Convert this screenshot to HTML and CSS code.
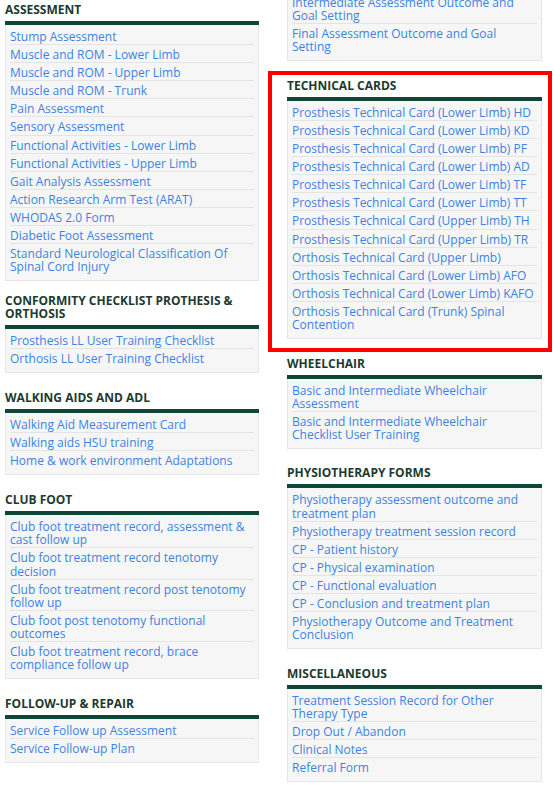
FILE: index.html
```html
<!DOCTYPE html>
<html lang="en">
<head>
<meta charset="utf-8">
<title>Forms</title>
<link rel="stylesheet" href="styles.css">
</head>
<body>
<div class="page">
  <div class="col col-left">
    <section class="sec sec-tight">
      <h2 class="sec-title">Assessment</h2>
      <ul class="box">
        <li><a href="#">Stump Assessment</a></li>
        <li><a href="#">Muscle and ROM - Lower Limb</a></li>
        <li><a href="#">Muscle and ROM - Upper Limb</a></li>
        <li><a href="#">Muscle and ROM - Trunk</a></li>
        <li><a href="#">Pain Assessment</a></li>
        <li><a href="#">Sensory Assessment</a></li>
        <li><a href="#">Functional Activities - Lower Limb</a></li>
        <li><a href="#">Functional Activities - Upper Limb</a></li>
        <li><a href="#">Gait Analysis Assessment</a></li>
        <li><a href="#">Action Research Arm Test (ARAT)</a></li>
        <li><a href="#">WHODAS 2.0 Form</a></li>
        <li><a href="#">Diabetic Foot Assessment</a></li>
        <li><a href="#">Standard Neurological Classification Of Spinal Cord Injury</a></li>
      </ul>
    </section>
    <section class="sec">
      <h2 class="sec-title">Conformity Checklist Prothesis &amp; Orthosis</h2>
      <ul class="box">
        <li><a href="#">Prosthesis LL User Training Checklist</a></li>
        <li><a href="#">Orthosis LL User Training Checklist</a></li>
      </ul>
    </section>
    <section class="sec">
      <h2 class="sec-title">Walking Aids and ADL</h2>
      <ul class="box">
        <li><a href="#">Walking Aid Measurement Card</a></li>
        <li><a href="#">Walking aids HSU training</a></li>
        <li><a href="#">Home &amp; work environment Adaptations</a></li>
      </ul>
    </section>
    <section class="sec">
      <h2 class="sec-title">Club Foot</h2>
      <ul class="box">
        <li><a href="#">Club foot treatment record, assessment &amp; cast follow up</a></li>
        <li><a href="#">Club foot treatment record tenotomy decision</a></li>
        <li><a href="#">Club foot treatment record post tenotomy follow up</a></li>
        <li><a href="#">Club foot post tenotomy functional outcomes</a></li>
        <li><a href="#">Club foot treatment record, brace compliance follow up</a></li>
      </ul>
    </section>
    <section class="sec">
      <h2 class="sec-title">Follow-up &amp; Repair</h2>
      <ul class="box">
        <li><a href="#">Service Follow up Assessment</a></li>
        <li><a href="#">Service Follow-up Plan</a></li>
      </ul>
    </section>
  </div>

  <div class="col col-right">
    <section class="sec">
      <ul class="box box-cont">
        <li><a href="#">Intermediate Assessment Outcome and Goal Setting</a></li>
        <li><a href="#">Final Assessment Outcome and Goal Setting</a></li>
      </ul>
    </section>
    <section class="sec">
      <h2 class="sec-title">Technical Cards</h2>
      <ul class="box">
        <li><a href="#">Prosthesis Technical Card (Lower Limb) HD</a></li>
        <li><a href="#">Prosthesis Technical Card (Lower Limb) KD</a></li>
        <li><a href="#">Prosthesis Technical Card (Lower Limb) PF</a></li>
        <li><a href="#">Prosthesis Technical Card (Lower Limb) AD</a></li>
        <li><a href="#">Prosthesis Technical Card (Lower Limb) TF</a></li>
        <li><a href="#">Prosthesis Technical Card (Lower Limb) TT</a></li>
        <li><a href="#">Prosthesis Technical Card (Upper Limb) TH</a></li>
        <li><a href="#">Prosthesis Technical Card (Upper Limb) TR</a></li>
        <li><a href="#">Orthosis Technical Card (Upper Limb)</a></li>
        <li><a href="#">Orthosis Technical Card (Lower Limb) AFO</a></li>
        <li><a href="#">Orthosis Technical Card (Lower Limb) KAFO</a></li>
        <li><a href="#">Orthosis Technical Card (Trunk) Spinal Contention</a></li>
      </ul>
    </section>
    <section class="sec">
      <h2 class="sec-title">Wheelchair</h2>
      <ul class="box">
        <li><a href="#">Basic and Intermediate Wheelchair Assessment</a></li>
        <li><a href="#">Basic and Intermediate Wheelchair Checklist User Training</a></li>
      </ul>
    </section>
    <section class="sec">
      <h2 class="sec-title">Physiotherapy Forms</h2>
      <ul class="box">
        <li><a href="#">Physiotherapy assessment outcome and treatment plan</a></li>
        <li><a href="#">Physiotherapy treatment session record</a></li>
        <li><a href="#">CP - Patient history</a></li>
        <li><a href="#">CP - Physical examination</a></li>
        <li><a href="#">CP - Functional evaluation</a></li>
        <li><a href="#">CP - Conclusion and treatment plan</a></li>
        <li><a href="#">Physiotherapy Outcome and Treatment Conclusion</a></li>
      </ul>
    </section>
    <section class="sec">
      <h2 class="sec-title">Miscellaneous</h2>
      <ul class="box">
        <li><a href="#">Treatment Session Record for Other Therapy Type</a></li>
        <li><a href="#">Drop Out / Abandon</a></li>
        <li><a href="#">Clinical Notes</a></li>
        <li><a href="#">Referral Form</a></li>
      </ul>
    </section>
  </div>
</div>
<div class="highlight" aria-hidden="true"></div>
</body>
</html>
```
FILE: styles.css
```css
* { box-sizing: border-box; }

html, body {
  margin: 0;
  padding: 0;
  background: #ffffff;
}

body {
  position: relative;
  font-family: "Open Sans", "Liberation Sans", Arial, sans-serif;
  font-size: 12px;
  overflow: hidden;
  height: 789px;
}

.page {
  display: grid;
  grid-template-columns: 254px 255px;
  column-gap: 28px;
  padding-left: 5px;
  align-items: start;
}

.col-left {
  padding-top: 3px;
}

.col-right {
  margin-top: -7px;
}

.sec {
  margin-bottom: 18px;
}

.col-right .sec {
  margin-bottom: 17.5px;
}

.sec-tight {
  margin-bottom: 12.5px;
}

.sec-title {
  margin: 0;
  padding-bottom: 5px;
  border-bottom: 4px solid #0e4737;
  font-size: 12px;
  line-height: 13px;
  font-weight: 700;
  text-transform: uppercase;
  color: #1d3a31;
}

.box {
  list-style: none;
  margin: 0;
  padding: 2px 4px 6px 4px;
  background: #f6f6f6;
  border: 1px solid #e6e6e6;
  border-top: 0;
}

.box-cont {
  padding-top: 0;
}

.box li {
  padding: 3px 0 1px 0;
  line-height: 13.1px;
  border-bottom: 1px solid #e4e4e4;
}

.box li:last-child {
  border-bottom: 0;
}

.box a {
  color: #3a83e4;
  text-decoration: none;
}

.highlight {
  position: absolute;
  left: 268px;
  top: 71px;
  width: 284px;
  height: 281px;
  border: 4px solid #ff0000;
  pointer-events: none;
}
```
